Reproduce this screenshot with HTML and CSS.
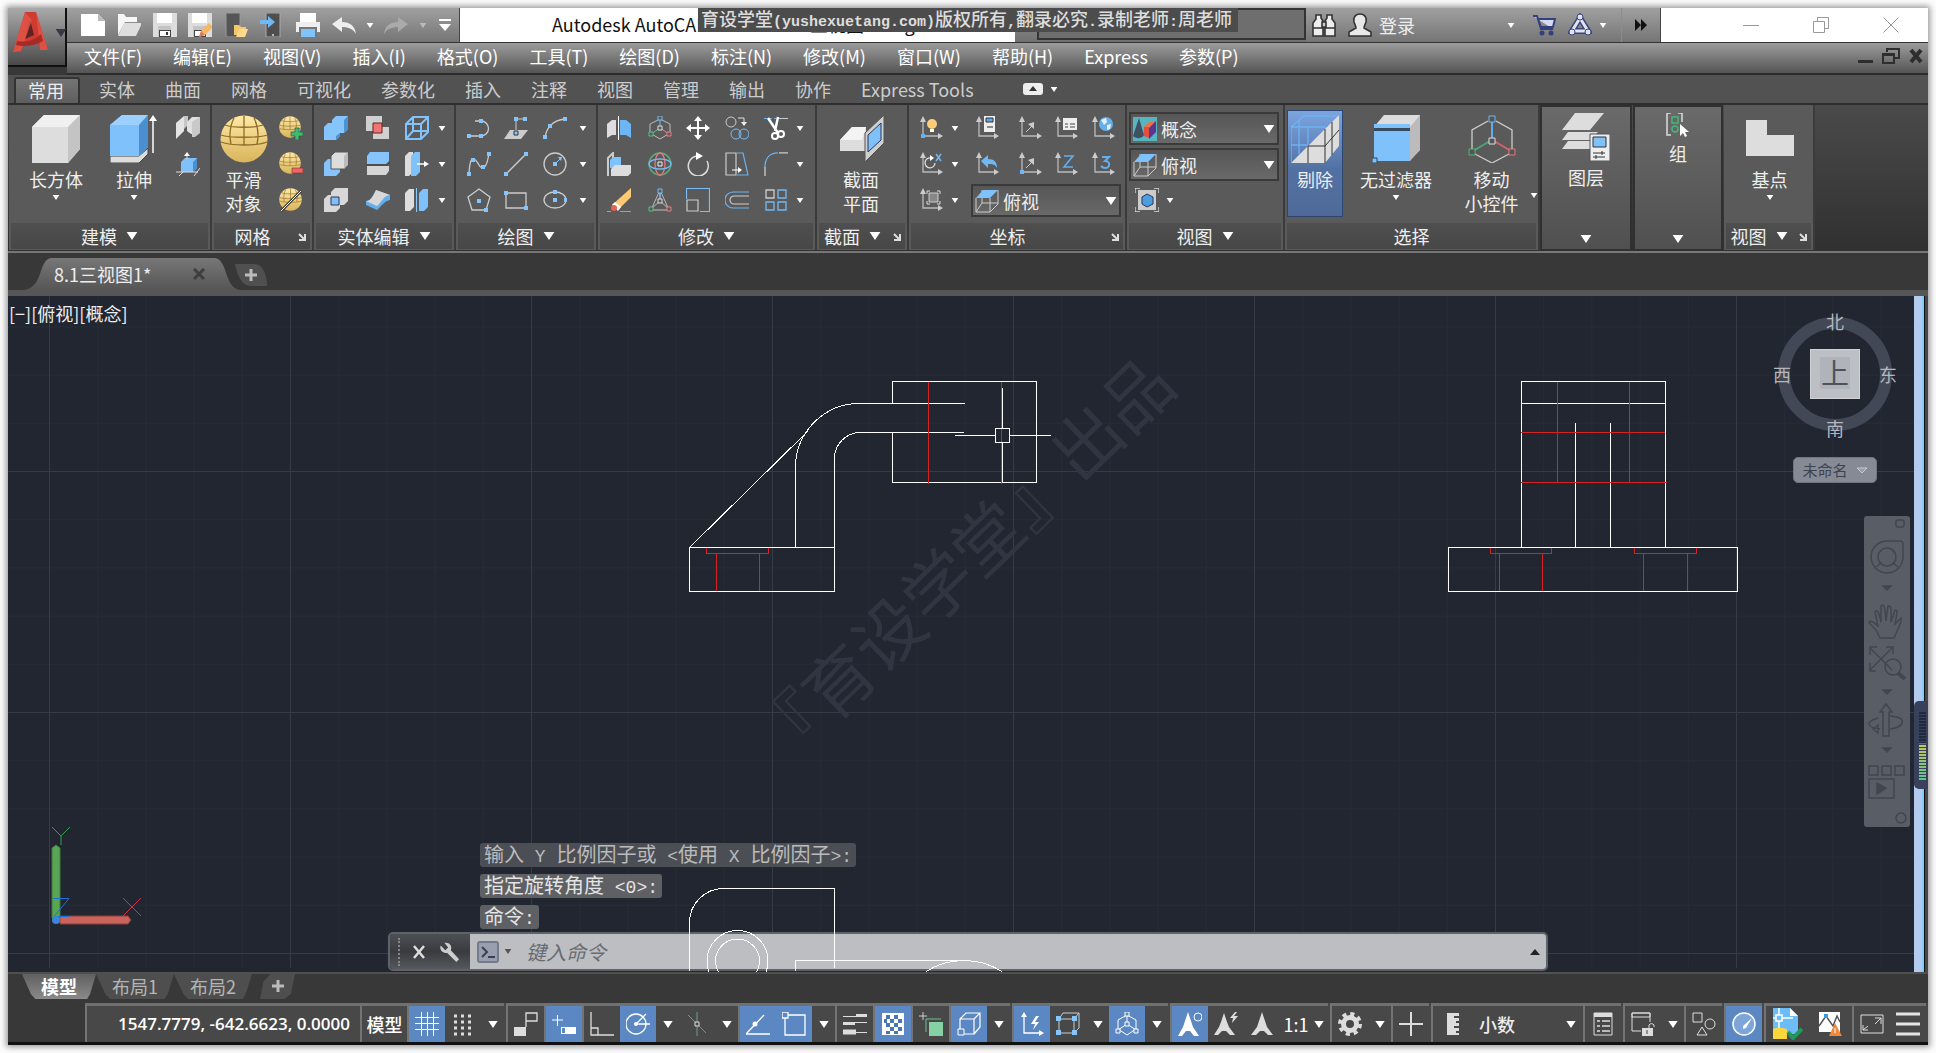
FILE: index.html
```html
<!DOCTYPE html>
<html lang="zh-CN">
<head>
<meta charset="utf-8">
<title>Autodesk AutoCAD 2018</title>
<link rel="stylesheet" href="styles.css">
</head>
<body>
<svg class="defs" aria-hidden="true">
<defs>
<linearGradient id="gG" x1="0" y1="0" x2="0" y2="1"><stop offset="0" stop-color="#ffe9a6"/><stop offset="1" stop-color="#d9b45a"/></linearGradient>
<pattern id="minor" width="48.2" height="48.2" patternUnits="userSpaceOnUse" x="49" y="230"><path d="M.5 0V48.2M0 .5H48.2" stroke="#262c37" fill="none"/></pattern>
<pattern id="major" width="241" height="241" patternUnits="userSpaceOnUse" x="49" y="230"><path d="M.5 0V241M0 .5H241" stroke="#353b47" fill="none"/></pattern>
</defs>
<symbol id="new" viewBox="0 0 24 24"><path d="M0 1h17l7 7v15H0z" fill="#fff"/><path d="M17 1v7h7z" fill="#bbb"/></symbol>
<symbol id="open" viewBox="0 0 24 24"><path d="M1 1h6l2 3h11v5H8L1 22z" fill="#f6f6f6"/><path d="M7 10h18l-6 13H1z" fill="#dedede"/></symbol>
<symbol id="save" viewBox="0 0 24 24"><path d="M0 0h24v24H0z" fill="#ddd"/><path d="M4 0h15v10H4z" fill="#fff"/><path d="M5 13h13v11H5z" fill="#c4c4c4"/><path d="M6 17h12v7H6z" fill="#444"/><path d="M7 18h10v5H7z" fill="#fff"/><path d="M13 19h2v3h-2z" fill="#333"/></symbol>
<symbol id="saveas" viewBox="0 0 24 24"><use href="#save"/><path d="M11 24l2-6 8-8 4 4-8 8z" fill="#f3b860"/><path d="M11 24l2-6 4 4z" fill="#e07466"/></symbol>
<symbol id="mopen" viewBox="0 0 24 24"><path d="M2 0h14v24H2z" fill="#555" stroke="#999"/><path d="M10 12h5l2 2h5v8H10z" fill="#f8c56b"/><path d="M12 24l3-8h9l-3 8z" fill="#ffd98c"/></symbol>
<symbol id="msave" viewBox="0 0 24 24"><path d="M6 0h14v24H6z" fill="#4e4e4e" stroke="#aaa"/><path d="M0 7h8V3l7 6-7 6v-4H0z" fill="#6db8f5"/><circle cx="13" cy="22" r="1" fill="#ddd"/></symbol>
<symbol id="print" viewBox="0 0 24 24"><path d="M4 0h16v9H4z" fill="#fff"/><path d="M0 9h24v10H0z" fill="#eee"/><path d="M3 14h18v10H3z" fill="#777"/><path d="M5 16h14v8H5z" fill="#7ec4fb"/></symbol>
<symbol id="undo" viewBox="0 0 24 24"><path d="M0 11L10 4v5c8 0 13 4 14 12-3-5-7-7-14-7v5z" fill="#eee"/></symbol>
<symbol id="redo" viewBox="0 0 24 24"><path d="M24 11L14 4v5C6 9 1 13 0 21c3-5 7-7 14-7v5z" fill="#aaa"/></symbol>
<symbol id="down" viewBox="0 0 8 6"><path d="M0 0h8L4 6z" fill="currentColor"/></symbol>
<symbol id="corner" viewBox="0 0 8 8"><path d="M1 1l6 6M7 1v6H1" stroke="currentColor" stroke-width="2" fill="none"/></symbol>
<symbol id="bino" viewBox="0 0 24 24"><path d="M4 2h5v3l2 3v15H1V10l3-4zM15 2h5v4l3 4v13H13V8l2-3z" fill="#eee" stroke="#333" stroke-width="1.600"/><path d="M1 15h10M13 15h10M10 9h4v5h-4z" fill="#ccc" stroke="#333" stroke-width="1.600"/></symbol>
<symbol id="user" viewBox="0 0 24 24"><path d="M12 1c5 0 7 4 6 8-1 3-2 4-2 6l7 4v4H1v-4l7-4c0-2-1-3-2-6-1-4 1-8 6-8z" fill="#e8e8e8" stroke="#333" stroke-width="1.6"/></symbol>
<symbol id="cart" viewBox="0 0 24 24"><path d="M1 3h4l4 13h12M6 6h17l-2 8H9z" fill="#d6daf0" stroke="#34407c" stroke-width="2"/><circle cx="10" cy="20" r="2.5" fill="#34407c"/><circle cx="19" cy="20" r="2.5" fill="#34407c"/></symbol>
<symbol id="a360" viewBox="0 0 24 24"><path d="M12 5L4 18h16z" fill="none" stroke="#3a437c" stroke-width="6"/><path d="M12 5L4 18h16z" fill="none" stroke="#e0e3f0" stroke-width="3"/><circle cx="12" cy="4" r="3" fill="#e0e3f0" stroke="#3a437c"/><circle cx="4" cy="19" r="3" fill="#e0e3f0" stroke="#3a437c"/><circle cx="20" cy="19" r="3" fill="#e0e3f0" stroke="#3a437c"/></symbol>
<symbol id="box" viewBox="0 0 48 48"><path d="M0 12L12 0h36v34L36 48H0z" fill="#ddd"/><path d="M0 12L12 0h36L36 12z" fill="#f0f0f0"/><path d="M36 12L48 0v34L36 48z" fill="#c4c4c4"/></symbol>
<symbol id="extrude" viewBox="0 0 48 48"><path d="M0 41h29l9-8v6l-9 9H0z" fill="#ddd" stroke="#444"/><path d="M0 10L12 0h26v32l-9 9H0z" fill="#7fc1fb"/><path d="M0 10L12 0h26l-9 10z" fill="#9cd1ff"/><path d="M29 10l9-10v32l-9 9z" fill="#4a8fd0"/><path d="M43 38V4" stroke="#fff" stroke-width="1.5"/><path d="M39 6l4-6 4 6z" fill="#fff"/></symbol>
<symbol id="poly" viewBox="0 0 24 24"><path d="M0 7l8-7v15l-8 8z" fill="#e4e4e4"/><path d="M8 0h4v9l-4 4z" fill="#c6c6c6"/><path d="M11 6l5-5h8v16l-5 1h-4l-4-3z" fill="#e0e0e0"/><path d="M16 6l8-5v16l-5 4h-3z" fill="#c9c9c9"/></symbol>
<symbol id="press" viewBox="0 0 24 24"><path d="M5 10l4-4h12v10l-4 4H5z" fill="#7fc1fb"/><path d="M17 10l4-4v10l-4 4z" fill="#4a8fd0"/><path d="M0 20h22M3 24l4-4M18 24l6-8M11 7V1" stroke="#ddd" fill="none"/><path d="M8 4l3-4 3 4z" fill="#fff"/></symbol>
<symbol id="egg" viewBox="0 0 48 48"><circle cx="24" cy="24" r="23.5" fill="url(#gG)"/><path d="M24 1v29M1 20c8 3 38 3 46 0M5 10c8 3 30 3 38 0M14 3c-4 8-5 17-3 26M34 3c4 8 5 17 3 26M1 27c10 4 36 4 46 0" fill="none" stroke="#8d6d28" stroke-width="1.3"/></symbol>
<symbol id="eggp" viewBox="0 0 24 24"><svg width="22" height="22" viewBox="0 0 48 48"><use href="#egg"/></svg><path d="M16 12h4v4h4v4h-4v4h-4v-4h-4v-4h4z" fill="#40ba73" stroke="#32583f" stroke-width=".7"/></symbol>
<symbol id="eggm" viewBox="0 0 24 24"><svg width="22" height="22" viewBox="0 0 48 48"><use href="#egg"/></svg><path d="M13 16h11v5H13z" fill="#e66" stroke="#733" stroke-width=".6"/></symbol>
<symbol id="eggs" viewBox="0 0 24 24"><svg width="23" height="23" viewBox="0 0 48 48"><use href="#egg"/></svg><path d="M2 23L22 3" stroke="#444" stroke-width="3"/><path d="M2 23L22 3" stroke="#eee"/></symbol>
<symbol id="union" viewBox="0 0 24 24"><path d="M0 11l4-4h4V4l4-4h12v13l-4 4h-4v3l-4 4H0z" fill="#85c5fc"/><path d="M20 4l4-4v13l-4 4zM12 20l4-3v3l-4 4z" fill="#4d92d4"/></symbol>
<symbol id="subtract" viewBox="0 0 24 24"><path d="M0 11l4-4h12v13l-4 4H0z" fill="#85c5fc"/><path d="M7 4l4-4h13v13l-4 4H7z" fill="#ddd" stroke="#555"/><path d="M20 4l4-4v13l-4 4z" fill="#bbb"/></symbol>
<symbol id="intersect" viewBox="0 0 24 24"><path d="M0 11l4-4h12v13l-4 4H0zM7 4l4-4h13v13l-4 4H7z" fill="#d8d8d8"/><path d="M7 9h8v8H7z" fill="#7fc1fb" stroke="#335"/></symbol>
<symbol id="interf" viewBox="0 0 24 24"><path d="M0 0h16v15H0zM12 11h11v12H7v-6z" fill="#d0d0d0"/><path d="M7 7h9v10H7z" fill="#f27474" stroke="#622"/></symbol>
<symbol id="slice" viewBox="0 0 24 24"><path d="M1 4l3-4h19v9l-3 3H1z" fill="#85c5fc"/><path d="M1 14h22v5l-3 4H1z" fill="#d5d5d5"/><path d="M0 13h21l3-3" stroke="#444" fill="none"/></symbol>
<symbol id="thick" viewBox="0 0 24 24"><path d="M0 13c5 0 7-5 10-11l14 5v5c-7 2-8 6-13 10L0 17z" fill="#65aeec"/><path d="M0 13c5 0 7-5 10-11l14 5c-7 1-8 7-13 11z" fill="#d8d8d8"/></symbol>
<symbol id="wire" viewBox="0 0 24 24"><path d="M1 8l7-7h15v15l-7 7H1zM1 8h15v15M16 8l7-7M8 1v14h15M8 15l-7 8" fill="none" stroke="#84c3fa" stroke-width="2"/></symbol>
<symbol id="exface" viewBox="0 0 24 24"><path d="M0 4l4-4h4v20l-4 4H0z" fill="#ddd"/><path d="M6 4l4-4h5v20l-4 4H6z" fill="#7fc1fb"/><path d="M12 12h9" stroke="#fff" stroke-width="1.5"/><path d="M19 9l5 3-5 3z" fill="#fff"/></symbol>
<symbol id="sep2" viewBox="0 0 24 24"><path d="M0 5l4-4h5v18l-4 4H0z" fill="#ddd"/><path d="M14 5l4-4h5v18l-4 4h-5z" fill="#7fc1fb"/><path d="M11.500 0v24" stroke="#8cc8fa"/></symbol>
<symbol id="mirror" viewBox="0 0 24 24"><path d="M0 8l5-4h4v15H5l-5 3z" fill="#ddd"/><path d="M13 4h6l5 4v14l-5-3h-6z" fill="#6db6f5"/><path d="M11.500 0v24" stroke="#fff"/></symbol>
<symbol id="pline" viewBox="0 0 24 24"><path d="M1 20h13a7 7 0 0 0 0-15H8" fill="none" stroke="#ccc" stroke-width="1.300"/><path d="M0 18h4v4H0zM12 18h4v4h-4zM12 3h4v4h-4z" fill="#86c5fb"/></symbol>
<symbol id="pline3" viewBox="0 0 24 24"><path d="M0 23l6-9h18l-7 9z" fill="#ccc"/><path d="M12 17V3h9" fill="none" stroke="#ccc"/><path d="M10 1h4v4h-4zM19 1h4v4h-4z" fill="#86c5fb"/><path d="M10 15h4v4h-4z" fill="#86c5fb" stroke="#333"/></symbol>
<symbol id="arc" viewBox="0 0 24 24"><path d="M2 22C3 12 10 4 22 3" fill="none" stroke="#ccc" stroke-width="1.300"/><path d="M0 19h4v4H0zM5 8h4v4H5zM20 1h4v4h-4z" fill="#86c5fb"/></symbol>
<symbol id="spline" viewBox="0 0 24 24"><path d="M2 22C3 0 8 6 12 13c4 7 8 2 10-12" fill="none" stroke="#ccc" stroke-width="1.300"/><path d="M0 20h4v4H0zM4 6h4v4H4zM14 13h4v4h-4zM20 0h4v4h-4z" fill="#86c5fb"/></symbol>
<symbol id="line" viewBox="0 0 24 24"><path d="M2 22L22 2" stroke="#ccc" stroke-width="1.300"/><path d="M0 20h4v4H0zM20 0h4v4h-4z" fill="#86c5fb"/></symbol>
<symbol id="circle" viewBox="0 0 24 24"><circle cx="12" cy="12" r="11" fill="none" stroke="#ccc" stroke-width="1.300"/><path d="M12 12l5-5" stroke="#86c5fb"/><path d="M10 10h4v4h-4zM15 5h4l-1 4z" fill="#86c5fb"/></symbol>
<symbol id="polygon" viewBox="0 0 24 24"><path d="M12 1l11 8-4 13H5L1 9z" fill="none" stroke="#ccc" stroke-width="1.300"/><path d="M10 11h4v4h-4zM17 20h4v4h-4z" fill="#86c5fb"/></symbol>
<symbol id="rect" viewBox="0 0 24 24"><path d="M2 5h20v15H2z" fill="none" stroke="#ccc" stroke-width="1.300"/><path d="M0 3h4v4H0zM20 18h4v4h-4z" fill="#86c5fb"/></symbol>
<symbol id="ellipse" viewBox="0 0 24 24"><ellipse cx="12" cy="12" rx="11" ry="8" fill="none" stroke="#ccc" stroke-width="1.300"/><path d="M10 10h4v4h-4zM10 2h4v4h-4zM21 10h4v4h-4z" fill="#86c5fb"/></symbol>
<symbol id="align" viewBox="0 0 24 24"><path d="M1 24V6l5-5v9" fill="none" stroke="#ccc" stroke-width="2"/><path d="M3 8l3-3h8v8l-3 3H3z" fill="#7fc1fb"/><path d="M4 17l4-4h16v8l-3 3H4z" fill="#ddd"/></symbol>
<symbol id="erase" viewBox="0 0 24 24"><path d="M5 17L24 0v9L11 22z" fill="#fcca72"/><path d="M5 17l3-3 6 5-3 4z" fill="#fff"/><circle cx="7" cy="20" r="3" fill="#ea5f55"/><path d="M0 23.500h4M13 23.500h11" stroke="#6ab0ec"/></symbol>
<symbol id="gmove" viewBox="0 0 24 24"><path d="M12 3l10 5v9l-10 6-10-6V8z" fill="none" stroke="#bbb"/><path d="M12 3v9" stroke="#73bcf7"/><path d="M12 12l-9 6" stroke="#52c285"/><path d="M12 12l9 6" stroke="#f27980"/><path d="M10 0h4v4h-4z" fill="#5a5a5a" stroke="#73bcf7"/><path d="M1 16h4v4H1z" fill="#5a5a5a" stroke="#52c285"/><path d="M19 16h4v4h-4z" fill="#5a5a5a" stroke="#f27980"/><path d="M10 10h4v4h-4z" fill="#5a5a5a" stroke="#ddd"/></symbol>
<symbol id="grot" viewBox="0 0 24 24"><circle cx="12" cy="12" r="11" fill="none" stroke="#55b27d" stroke-width="1.300"/><ellipse cx="12" cy="12" rx="5" ry="11" fill="none" stroke="#e8777c" stroke-width="1.300"/><ellipse cx="12" cy="12" rx="11" ry="5" fill="none" stroke="#76b9f2" stroke-width="1.300"/><path d="M10 10h4v4h-4z" fill="#5a5a5a" stroke="#eee"/></symbol>
<symbol id="gscale" viewBox="0 0 24 24"><path d="M12 2L3 22h18zM12 13l-9 8M12 13l9 8M12 2v11" fill="none" stroke="#bbb"/><path d="M12 2v11" stroke="#73bcf7"/><path d="M10 1h4v4h-4z" fill="#5a5a5a" stroke="#73bcf7"/><path d="M1 19h4v4H1z" fill="#5a5a5a" stroke="#52c285"/><path d="M19 19h4v4h-4z" fill="#5a5a5a" stroke="#f27980"/><path d="M10 11h4v4h-4z" fill="#5a5a5a" stroke="#ddd"/></symbol>
<symbol id="move" viewBox="0 0 24 24"><path d="M12 3v18M3 12h18" stroke="#fff" stroke-width="2"/><path d="M8 5l4-5 4 5zM8 19l4 5 4-5zM5 8l-5 4 5 4zM19 8l5 4-5 4z" fill="#fff"/></symbol>
<symbol id="rotate" viewBox="0 0 24 24"><path d="M11 4A10 10 0 1 0 21 9" fill="none" stroke="#ddd" stroke-width="1.500"/><path d="M10 0l7 4-7 4z" fill="#fff"/></symbol>
<symbol id="scale" viewBox="0 0 24 24"><path d="M.500 11V.500h23v23H14" fill="none" stroke="#7abcf3" stroke-width="1.200"/><path d="M1 12h11v11H1z" fill="none" stroke="#ccc" stroke-width="1.200"/></symbol>
<symbol id="copy" viewBox="0 0 24 24"><circle cx="6" cy="6" r="5" fill="none" stroke="#ccc"/><path d="M13 2h6v5" fill="none" stroke="#ddd"/><path d="M16 6h6l-3 4z" fill="#eee"/><circle cx="11" cy="18" r="5" fill="none" stroke="#78bcf5"/><circle cx="19" cy="18" r="5" fill="none" stroke="#78bcf5"/></symbol>
<symbol id="stretch" viewBox="0 0 24 24"><path d="M1 1h10v22H1z" fill="none" stroke="#ccc" stroke-width="1.200"/><path d="M12 1h6l5 22H12" fill="none" stroke="#6ab0ec" stroke-width="1.200"/><path d="M7 18h8" stroke="#fff"/><path d="M13 15l4 3-4 3z" fill="#fff"/></symbol>
<symbol id="offset" viewBox="0 0 24 24"><path d="M24 4H8a8 8 0 0 0 0 16h16" fill="none" stroke="#6db3ee" stroke-width="1.200"/><path d="M24 8H9a4 4 0 0 0 0 8h15" fill="none" stroke="#ccc" stroke-width="1.200"/></symbol>
<symbol id="trim" viewBox="0 0 24 24"><path d="M0 2.500h12" stroke="#6ab0ec" stroke-dasharray="3 2"/><path d="M15 2.500h9" stroke="#ccc"/><path d="M4 2l10 15M14 1l-3 14" stroke="#fff" stroke-width="2.500"/><circle cx="11" cy="20" r="3" fill="none" stroke="#fff" stroke-width="2"/><circle cx="17" cy="18" r="3" fill="none" stroke="#fff" stroke-width="2"/></symbol>
<symbol id="fillet" viewBox="0 0 24 24"><path d="M1 15C1 6 6 1 14 .800" fill="none" stroke="#6db3ee" stroke-width="1.300"/><path d="M1 15v9M15 .800h9" stroke="#ccc" stroke-width="1.300"/></symbol>
<symbol id="array" viewBox="0 0 24 24"><path d="M2 2h8v8H2z" fill="none" stroke="#ccc" stroke-width="1.300"/><path d="M14 2h8v8h-8zM2 14h8v8H2zM14 14h8v8h-8z" fill="none" stroke="#73b8f2" stroke-width="1.300"/></symbol>
<symbol id="section" viewBox="0 0 48 48"><path d="M3 25l12-13h14v24H3z" fill="#ddd"/><path d="M3 25l12-13h14l-4 13z" fill="#f3f3f3"/><path d="M28 18L47 0v28L28 47z" fill="#cfcfcf" stroke="#555"/><path d="M31 20l13-12v17L31 37z" fill="#7fc1fb" stroke="#335"/></symbol>
<symbol id="ax" viewBox="0 0 24 24"><path d="M4 4v16h17" fill="none" stroke="#bbb" stroke-width="1.300"/><path d="M1 6l3-6 3 6zM19 17l5 3-5 3z" fill="#ccc"/></symbol>
<symbol id="ucs" viewBox="0 0 24 24"><use href="#ax"/><circle cx="13" cy="8" r="5" fill="#fbcd78"/><path d="M11 13h4v3h-4z" fill="#fff"/><path d="M2 18h4v4H2z" fill="#64b1f0"/></symbol>
<symbol id="ucsn" viewBox="0 0 24 24"><use href="#ax"/><path d="M9 0h11v16H9z" fill="#eee"/><path d="M11 2h7v4h-7z" fill="#5aa9ea" stroke="#333"/><path d="M12 11h6" stroke="#222"/></symbol>
<symbol id="ucso" viewBox="0 0 24 24"><use href="#ax"/><path d="M8 16l6-6" stroke="#ccc"/><path d="M16 6v7l-6-5z" fill="#ccc"/></symbol>
<symbol id="ucsm" viewBox="0 0 24 24"><use href="#ax"/><path d="M9 2h14v12H9z" fill="#eee"/><path d="M11 8h3M16 8h5M11 11h3M16 11h5" stroke="#444"/></symbol>
<symbol id="ucsw" viewBox="0 0 24 24"><use href="#ax"/><circle cx="15" cy="8" r="7" fill="#63b0ee"/><path d="M10 4l5-2 1 4-3 3zM16 9l4-1-1 5-3 1z" fill="#eee"/></symbol>
<symbol id="ucsx" viewBox="0 0 24 24"><use href="#ax"/><path d="M12 6a5 5 0 1 0 4 5" fill="none" stroke="#ddd" stroke-width="1.300"/><path d="M11 3l4 3-4 3z" fill="#fff"/><path d="M17 2l5 7M22 2l-5 7" stroke="#6fb5f0" stroke-width="1.600"/></symbol>
<symbol id="ucsp" viewBox="0 0 24 24"><use href="#ax"/><path d="M6 9l7-6v4c6 0 9 3 9 9-2-4-5-4-9-4v4z" fill="#6fb8f5"/></symbol>
<symbol id="ucs2" viewBox="0 0 24 24"><use href="#ucso"/><path d="M2 18h4v4H2z" fill="#6fb8f5"/></symbol>
<symbol id="ucsz" viewBox="0 0 24 24"><use href="#ax"/><path d="M10 4h9l-9 11h9" fill="none" stroke="#62aeee" stroke-width="1.600"/></symbol>
<symbol id="ucs3" viewBox="0 0 24 24"><use href="#ax"/><path d="M11 5h7l-4 4c6 0 5 7 0 7-2 0-3-1-4-2" fill="none" stroke="#62aeee" stroke-width="2"/></symbol>
<symbol id="ucsv" viewBox="0 0 24 24"><use href="#ax"/><path d="M10 5h9v9h-9z" fill="#888" stroke="#ccc"/><path d="M8 6V3h3M18 3h3v3M21 13v3h-3M11 16H8v-3" fill="none" stroke="#ddd"/></symbol>
<symbol id="cube" viewBox="0 0 24 24"><path d="M1 9v14h14V9M7 1v13M23 1v14l-8 8M7 14h16M7 14l-6 9" fill="none" stroke="#ccc"/><path d="M1 9l7-8h15l-8 8z" fill="#7fc1fb"/></symbol>
<symbol id="concept" viewBox="0 0 24 24"><path d="M0 0h24v24H0z" fill="#55b6c0"/><path d="M6 1l5 17c-2 4-8 4-11 1z" fill="#3e5064"/><path d="M11 10l5-3v14l-5-2z" fill="#e44d3c"/><path d="M11 10l5-5 7-1-4 6z" fill="#f0704a"/><path d="M16 11l7-7v11l-7 7z" fill="#5a3590"/></symbol>
<symbol id="vp" viewBox="0 0 24 24"><path d="M3 2h18v20H3z" fill="#ccc"/><path d="M7 9l5-3 6 3v7l-6 3-5-3z" fill="#4b9fe0" stroke="#335"/><path d="M0 5V0h5M19 0h5v5M24 19v5h-5M5 24H0v-5" fill="none" stroke="#ddd" stroke-width="1.300"/></symbol>
<symbol id="cull" viewBox="0 0 48 48"><path d="M0 48L48 0v31L34 48z" fill="#ddd"/><path d="M17 31v17M17 31h17V14M34 31L48 15M34 48V31M41 40V7" stroke="#333" fill="none"/><path d="M0 47V12L13 1h34M0 12h35M17 29V12M0 30h17M8 39V5" stroke="#6fb2f5" stroke-width="1.300" fill="none"/></symbol>
<symbol id="nofilter" viewBox="0 0 48 48"><path d="M2 12L12 0h36v35L36 46z" fill="#ddd"/><path d="M38 12L48 0v35L38 46z" fill="#bbb"/><path d="M2 9h36v4H2zM2 16h36v30H2z" fill="#7fc1fb"/><path d="M2 13h36v3H2z" fill="#364b5f"/><path d="M0 43h5v5H0z" fill="#7fc1fb" stroke="#345"/></symbol>
<symbol id="gizmo" viewBox="0 0 48 48"><path d="M20 6L4 15v19M28 6l16 9v19M7 39l17 9 17-9" fill="none" stroke="#ccc" stroke-width="1.300"/><path d="M24 6v17" stroke="#60acea" stroke-width="2"/><path d="M22 26L5 36" stroke="#49a974" stroke-width="2"/><path d="M26 26l17 10" stroke="#d96068" stroke-width="2"/><path d="M21 1h6v6h-6z" fill="#555" stroke="#70b5ef"/><path d="M1 34h6v6H1z" fill="#555" stroke="#4fb57f"/><path d="M41 34h6v6h-6z" fill="#555" stroke="#e8777c"/><path d="M21 23h6v6h-6z" fill="#555" stroke="#ddd"/></symbol>
<symbol id="layers" viewBox="0 0 48 48"><path d="M0 17L13 0h29L28 17zM0 27l6-8h30l-8 8zM0 36l6-8h26v8z" fill="#ddd"/><path d="M28 21h20v27H28z" fill="#eee" stroke="#555"/><path d="M31 24h13v10H31z" fill="#7fc1fb" stroke="#333"/><path d="M31 40h12M31 44h12M40 38v4M34 42v4" stroke="#333"/></symbol>
<symbol id="group" viewBox="0 0 24 24"><path d="M5 0H1v22h4M12 0h4v9" fill="none" stroke="#ddd" stroke-width="1.500"/><path d="M6 4h6v6H6z" fill="none" stroke="#42b877" stroke-width="1.500"/><circle cx="9" cy="16" r="3" fill="none" stroke="#42b877" stroke-width="1.500"/><path d="M14 11v12l3-3 2 4 2-1-2-4h4z" fill="#fff"/></symbol>
<symbol id="basepoint" viewBox="0 0 48 48"><path d="M0 5h21v15h27v21H0z" fill="#ddd"/></symbol>
<symbol id="wrench" viewBox="0 0 24 24"><path d="M3 5l5 5 3-3-4-5c5-1 9 3 7 8l9 10-3 3L10 13C5 14 1 9 3 5z" fill="#ccc"/></symbol>
<symbol id="s-grid" viewBox="0 0 24 24"><path d="M6.500 0v24M12.500 0v24M18.500 0v24M0 5.500h24M0 11.500h24M0 17.500h24" stroke="#fff"/></symbol>
<symbol id="s-snap" viewBox="0 0 24 24"><path d="M3 4h3M10 4h3M17 4h3M3 10h3M10 10h3M17 10h3M3 16h3M10 16h3M17 16h3M3 22h3M10 22h3M17 22h3" stroke="#ddd" stroke-width="3"/></symbol>
<symbol id="s-infer" viewBox="0 0 24 24"><path d="M0 15h12v9H0z" fill="#ddd"/><path d="M12 15V1h11v8H12" fill="none" stroke="#ddd" stroke-width="1.300"/></symbol>
<symbol id="s-dyn" viewBox="0 0 24 24"><path d="M0 8h11M5.500 3v11" stroke="#fff"/><path d="M9 15h15v7H9z" fill="#fff"/><path d="M10 16h3v5h-3z" fill="#5d8ac2"/></symbol>
<symbol id="s-ortho" viewBox="0 0 24 24"><path d="M1 0v23h23M1 16h7v7" fill="none" stroke="#ddd" stroke-width="1.300"/></symbol>
<symbol id="s-polar" viewBox="0 0 24 24"><circle cx="10" cy="12" r="10" fill="none" stroke="#fff" stroke-width="1.300"/><path d="M10 12h14M10 12L20 2" stroke="#fff" stroke-width="1.300"/><circle cx="10" cy="12" r="2" fill="#fff"/></symbol>
<symbol id="s-iso" viewBox="0 0 24 24"><path d="M12 0v24" stroke="#62a383"/><path d="M3 3l18 18" stroke="#d86a6e"/><path d="M10 10h4v4h-4z" fill="#4a4a4a" stroke="#ddd"/></symbol>
<symbol id="s-track" viewBox="0 0 24 24"><path d="M18 3L0 22h24" fill="none" stroke="#fff" stroke-width="1.300"/><circle cx="9" cy="12" r="2.500" fill="#fff"/></symbol>
<symbol id="s-osnap" viewBox="0 0 24 24"><path d="M3 3h20v20H3z" fill="none" stroke="#fff" stroke-width="1.300"/><path d="M0 0h6v6H0z" fill="#5d8ac2" stroke="#fff" stroke-width="1.300"/></symbol>
<symbol id="s-lw" viewBox="0 0 24 24"><path d="M0 4.500h24M12 10.500h12M12 20.500h12" stroke="#ddd"/><path d="M0 11.500h12M13 3.500h11" stroke="#ddd" stroke-width="3"/><path d="M0 20h13" stroke="#ddd" stroke-width="5"/></symbol>
<symbol id="s-trans" viewBox="0 0 24 24"><path d="M1 1h22v22H1z" fill="#fff"/><path d="M5 3h4v4H5zM13 3h4v4h-4zM3 7h3v4H3zM9 7h4v4H9zM17 7h4v4h-4zM5 11h4v4H5zM13 11h4v4h-4zM9 15h4v4H9zM17 15h4v4h-4zM5 19h4v3H5zM13 19h4v3h-4z" fill="#4b76b5"/></symbol>
<symbol id="s-cycle" viewBox="0 0 24 24"><path d="M0 4h8M4 0v8" stroke="#ccc"/><path d="M7 20V7h15" fill="none" stroke="#70be90"/><path d="M10 10h14v14H10z" fill="#85d1a3"/></symbol>
<symbol id="s-3d" viewBox="0 0 24 24"><path d="M3 7h14v15H3zM3 7l6-6h14v14l-6 7M17 7l6-6" fill="none" stroke="#fff" stroke-width="1.200"/><path d="M1 17h6v6H1z" fill="#5d8ac2" stroke="#fff"/></symbol>
<symbol id="s-ducs" viewBox="0 0 24 24"><path d="M4 3v18h18" fill="none" stroke="#fff" stroke-width="1.300"/><path d="M1 5l3-5 3 5zM19 18l5 3-5 3zM16 4l-5 8h4l-2 6 6-8h-4l4-6z" fill="#fff"/></symbol>
<symbol id="s-filter" viewBox="0 0 24 24"><path d="M3 7h15v14H3zM3 7l4-6h16v15l-5 5M18 7l5-6" fill="none" stroke="#ccc"/><path d="M0 4h5v5H0zM16 4h5v5h-5zM0 18h5v5H0zM16 18h5v5h-5z" fill="#86c5fb"/></symbol>
<symbol id="s-gizmo" viewBox="0 0 24 24"><path d="M12 3l9 5v9l-9 6-9-6V8zM12 3v10M12 12l-9 6M12 12l9 6" fill="none" stroke="#fff"/><path d="M10 0h4v4h-4zM1 17h4v4H1zM19 17h4v4h-4zM10 10h4v4h-4z" fill="#5d8ac2" stroke="#fff"/></symbol>
<symbol id="s-a" viewBox="0 0 24 24"><path d="M12 0l3 9 2 6 6 8h-5l-4-4h-4l-4 4H1l6-8 2-6z" fill="#ddd"/></symbol>
<symbol id="s-a1" viewBox="0 0 24 24"><path d="M10 0l3 9 2 6 6 9h-5l-4-5H8l-4 5H0l5-9 2-6z" fill="#fff"/><circle cx="20" cy="5" r="4" fill="none" stroke="#fff"/></symbol>
<symbol id="s-a2" viewBox="0 0 24 24"><path d="M10 1l3 9 2 5 6 8h-5l-4-4H8l-4 4H0l5-8 2-5z" fill="#ddd"/><path d="M21 0l-5 6h3l-1 5 6-7h-4l3-4z" fill="#ddd"/></symbol>
<symbol id="s-gear" viewBox="0 0 24 24"><circle cx="12" cy="12" r="6.500" fill="none" stroke="#ddd" stroke-width="5"/><circle cx="12" cy="12" r="10" fill="none" stroke="#ddd" stroke-width="4" stroke-dasharray="4 3.850"/></symbol>
<symbol id="s-plus" viewBox="0 0 24 24"><path d="M12 0v24M0 12h24" stroke="#ddd" stroke-width="2"/></symbol>
<symbol id="s-ruler" viewBox="0 0 24 24"><path d="M6 1h12v3h-5v2h5v3h-3v2h3v3h-5v2h5v3h-3v2h3v2H6z" fill="#ddd"/></symbol>
<symbol id="s-props" viewBox="0 0 24 24"><path d="M3 1h18v22H3z" fill="none" stroke="#ddd"/><path d="M3 1h18v4H3z" fill="#ddd"/><path d="M6 9h3M11 9h8M6 14h3M11 14h8M6 19h3M11 19h8" stroke="#ddd" stroke-width="1.500"/></symbol>
<symbol id="s-lock" viewBox="0 0 24 24"><path d="M10 19H1V1h18v9" fill="none" stroke="#ddd"/><path d="M1 1h18v4H1z" fill="none" stroke="#ddd"/><path d="M11 16h11v8H11z" fill="#ddd"/><path d="M18 16v-3a3 3 0 0 1 5 0v2" fill="none" stroke="#ddd"/><path d="M16 18v4" stroke="#444"/></symbol>
<symbol id="s-iso2" viewBox="0 0 24 24"><path d="M1 1h9v9H1zM5 23l5-8 5 8z" fill="none" stroke="#ddd"/><circle cx="18" cy="12" r="5" fill="none" stroke="#ddd"/></symbol>
<symbol id="s-clock" viewBox="0 0 24 24"><circle cx="12" cy="12" r="11" fill="#7da5da" stroke="#fff" stroke-width="1.500"/><path d="M11 14l9-8-6 10-3 1z" fill="#fff"/></symbol>
<symbol id="s-dwg" viewBox="0 0 32 32"><path d="M2 0h17l8 8v18H2z" fill="#6bbcf7"/><path d="M19 0l8 8h-8z" fill="#fff"/><path d="M8 0v22M2 10h20" stroke="#fff" stroke-width="1.500"/><path d="M5 7h6v6H5z" fill="#6bbcf7" stroke="#fff" stroke-width="1.500"/><path d="M2 21c5-2 9-1 14 0v10H2z" fill="#fbd63c"/><path d="M17 24l5 6 9-9" fill="none" stroke="#22965b" stroke-width="4"/></symbol>
<symbol id="s-warn" viewBox="0 0 24 24"><path d="M1 0h21v20H1z" fill="#fff"/><path d="M1 14L8 4l7 10 4-10 3 6" fill="none" stroke="#555" stroke-width="1.500"/><path d="M6 2h4v4H6z" fill="#349dde"/><path d="M17 11l7 13H11z" fill="#f0883a"/><path d="M17 16v5" stroke="#fff"/></symbol>
<symbol id="s-full" viewBox="0 0 24 24"><path d="M1 3h22v18H1z" fill="none" stroke="#ddd"/><path d="M15 6h6v6M21 6l-6 6M3 13v5h5M3 18l5-4" fill="none" stroke="#ddd"/></symbol>
<symbol id="s-menu" viewBox="0 0 24 24"><path d="M0 2h24M0 12h24M0 22h24" stroke="#e6e6e6" stroke-width="3"/></symbol>
</svg>

<div class="app">
<header class="top">
  <button class="appbtn" aria-label="应用程序菜单"><svg width="38" height="44" viewBox="0 0 38 44"><path d="M13 1h11l12 38h-8l-3-9-13 3-3 8H1z" fill="#cf3a31"/><path d="M18 9l4 15-9 4z" fill="#5c2322"/><path d="M13 1L1 41l8-1L20 9zM24 1l12 38h-8z" fill="#e25a4c" opacity=".7"/><path d="M5 30c9 2 18-1 24-7l2 7c-8 5-18 6-27 4z" fill="#a82a27"/></svg><svg class="dn dn12"><use href="#down"/></svg></button>
  <div class="titlebar">
    <div class="qat">
      <button aria-label="新建"><svg class="i"><use href="#new"/></svg></button><button aria-label="打开"><svg class="i"><use href="#open"/></svg></button><button aria-label="保存"><svg class="i"><use href="#save"/></svg></button><button aria-label="另存为"><svg class="i"><use href="#saveas"/></svg></button><button aria-label="从移动设备打开"><svg class="i"><use href="#mopen"/></svg></button><button aria-label="保存到移动设备"><svg class="i"><use href="#msave"/></svg></button><button aria-label="打印"><svg class="i"><use href="#print"/></svg></button><button aria-label="放弃"><svg class="i"><use href="#undo"/></svg></button><button class="nar" aria-label="放弃列表"><svg class="dn"><use href="#down"/></svg></button><button aria-label="重做"><svg class="i"><use href="#redo"/></svg></button><button class="nar dim" aria-label="重做列表"><svg class="dn"><use href="#down"/></svg></button><button class="cust" aria-label="自定义"><svg width="12" height="12" viewBox="0 0 12 12"><path d="M0 1h12" stroke="#fff" stroke-width="2"/><path d="M0 5h12l-6 7z" fill="#fff"/></svg></button>
    </div>
    <div class="title">Autodesk AutoCAD 2018&nbsp;&nbsp; &nbsp; &nbsp; &nbsp;8.1三视图1.dwg</div>
    <input class="search" type="text" aria-label="搜索">
    <div class="info">
      <button aria-label="查找"><svg class="i"><use href="#bino"/></svg></button><button class="login"><svg class="i"><use href="#user"/></svg><span>登录</span><svg class="dn"><use href="#down"/></svg></button><button aria-label="商店"><svg class="i"><use href="#cart"/></svg></button><button class="a360" aria-label="A360"><svg class="i"><use href="#a360"/></svg><svg class="dn"><use href="#down"/></svg></button><button class="more" aria-label="更多"><svg width="12" height="12" viewBox="0 0 12 12"><path d="M0 0l6 6-6 6zM6 0l6 6-6 6z" fill="#111"/></svg></button>
    </div>
    <div class="winctl">
      <button aria-label="最小化"><svg width="16" height="16" viewBox="0 0 16 16"><path d="M0 8.500h16"/></svg></button><button aria-label="还原"><svg width="16" height="16" viewBox="0 0 16 16"><path d="M.500 4.500h11v11H.500zM4.500 4V.500h11v11H12"/></svg></button><button aria-label="关闭"><svg width="16" height="16" viewBox="0 0 16 16"><path d="M.500.500l15 15M15.500.500l-15 15"/></svg></button>
    </div>
    <div class="notice">育设学堂<b>(yushexuetang.com)</b>版权所有<b>,</b>翻录必究<b>.</b>录制老师<b>:</b>周老师</div>
  </div>
  <nav class="menubar">
    <button>文件(F)</button><button>编辑(E)</button><button>视图(V)</button><button>插入(I)</button><button>格式(O)</button><button>工具(T)</button><button>绘图(D)</button><button>标注(N)</button><button>修改(M)</button><button>窗口(W)</button><button>帮助(H)</button><button>Express</button><button>参数(P)</button>
    <div class="docctl"><svg width="15" height="18" viewBox="0 0 15 18"><path d="M0 13h15v3H0z" fill="#2e2e2e"/></svg><svg width="18" height="18" viewBox="0 0 18 18"><path d="M1 7h11v9H1zM5 5V2h12v9h-4M1 8h11" fill="none" stroke="#2e2e2e" stroke-width="2"/></svg><svg width="14" height="18" viewBox="0 0 14 18"><path d="M2 3l10 12M12 3L2 15" stroke="#2e2e2e" stroke-width="4"/></svg></div>
  </nav>
</header>

<nav class="tabs">
  <button class="on">常用</button><button>实体</button><button>曲面</button><button>网格</button><button>可视化</button><button>参数化</button><button>插入</button><button>注释</button><button>视图</button><button>管理</button><button>输出</button><button>协作</button><button>Express Tools</button>
  <button class="fold" aria-label="最小化功能区"><svg width="20" height="12" viewBox="0 0 20 12"><rect width="20" height="12" rx="3" fill="#eee"/><path d="M6 8l4-5 4 5z" fill="#333"/></svg><svg class="dn"><use href="#down"/></svg></button>
</nav>

<div class="ribbon">
  <section class="panel p-model"><div class="body">
    <button class="big"><svg class="b"><use href="#box"/></svg><span>长方体</span><svg class="dn"><use href="#down"/></svg></button>
    <button class="big"><svg class="b"><use href="#extrude"/></svg><span>拉伸</span><svg class="dn"><use href="#down"/></svg></button>
    <div class="col"><button aria-label="多段体"><svg class="i"><use href="#poly"/></svg></button><button aria-label="按住并拖动"><svg class="i"><use href="#press"/></svg></button></div>
  </div><h3>建模<svg class="dn dn12"><use href="#down"/></svg></h3></section>

  <section class="panel p-mesh"><div class="body">
    <button class="big"><svg class="b"><use href="#egg"/></svg><span>平滑<br>对象</span></button>
    <div class="col"><button aria-label="提高平滑度"><svg class="i"><use href="#eggp"/></svg></button><button aria-label="降低平滑度"><svg class="i"><use href="#eggm"/></svg></button><button aria-label="分割网格"><svg class="i"><use href="#eggs"/></svg></button></div>
  </div><h3>网格<svg class="corner"><use href="#corner"/></svg></h3></section>

  <section class="panel p-edit"><div class="body">
    <button aria-label="并集"><svg class="i"><use href="#union"/></svg></button><button aria-label="干涉"><svg class="i"><use href="#interf"/></svg></button><button aria-label="提取边"><svg class="i"><use href="#wire"/></svg></button><button aria-label="列表"><svg class="dn"><use href="#down"/></svg></button>
    <button aria-label="差集"><svg class="i"><use href="#subtract"/></svg></button><button aria-label="剖切"><svg class="i"><use href="#slice"/></svg></button><button aria-label="拉伸面"><svg class="i"><use href="#exface"/></svg></button><button aria-label="列表"><svg class="dn"><use href="#down"/></svg></button>
    <button aria-label="交集"><svg class="i"><use href="#intersect"/></svg></button><button aria-label="加厚"><svg class="i"><use href="#thick"/></svg></button><button aria-label="分割"><svg class="i"><use href="#sep2"/></svg></button><button aria-label="列表"><svg class="dn"><use href="#down"/></svg></button>
  </div><h3>实体编辑<svg class="dn dn12"><use href="#down"/></svg></h3></section>

  <section class="panel p-draw"><div class="body">
    <button aria-label="多段线"><svg class="i"><use href="#pline"/></svg></button><button aria-label="三维多段线"><svg class="i"><use href="#pline3"/></svg></button><button aria-label="圆弧"><svg class="i"><use href="#arc"/></svg></button><button aria-label="列表"><svg class="dn"><use href="#down"/></svg></button>
    <button aria-label="样条曲线"><svg class="i"><use href="#spline"/></svg></button><button aria-label="直线"><svg class="i"><use href="#line"/></svg></button><button aria-label="圆"><svg class="i"><use href="#circle"/></svg></button><button aria-label="列表"><svg class="dn"><use href="#down"/></svg></button>
    <button aria-label="多边形"><svg class="i"><use href="#polygon"/></svg></button><button aria-label="矩形"><svg class="i"><use href="#rect"/></svg></button><button aria-label="椭圆"><svg class="i"><use href="#ellipse"/></svg></button><button aria-label="列表"><svg class="dn"><use href="#down"/></svg></button>
  </div><h3>绘图<svg class="dn dn12"><use href="#down"/></svg></h3></section>

  <section class="panel p-modify"><div class="body">
    <button aria-label="三维镜像"><svg class="i"><use href="#mirror"/></svg></button><button aria-label="三维移动"><svg class="i"><use href="#gmove"/></svg></button><button aria-label="移动"><svg class="i"><use href="#move"/></svg></button><button aria-label="复制"><svg class="i"><use href="#copy"/></svg></button><button aria-label="修剪"><svg class="i"><use href="#trim"/></svg></button><button aria-label="列表"><svg class="dn"><use href="#down"/></svg></button>
    <button aria-label="三维对齐"><svg class="i"><use href="#align"/></svg></button><button aria-label="三维旋转"><svg class="i"><use href="#grot"/></svg></button><button aria-label="旋转"><svg class="i"><use href="#rotate"/></svg></button><button aria-label="拉伸"><svg class="i"><use href="#stretch"/></svg></button><button aria-label="圆角"><svg class="i"><use href="#fillet"/></svg></button><button aria-label="列表"><svg class="dn"><use href="#down"/></svg></button>
    <button aria-label="删除"><svg class="i"><use href="#erase"/></svg></button><button aria-label="三维缩放"><svg class="i"><use href="#gscale"/></svg></button><button aria-label="缩放"><svg class="i"><use href="#scale"/></svg></button><button aria-label="偏移"><svg class="i"><use href="#offset"/></svg></button><button aria-label="阵列"><svg class="i"><use href="#array"/></svg></button><button aria-label="列表"><svg class="dn"><use href="#down"/></svg></button>
  </div><h3>修改<svg class="dn dn12"><use href="#down"/></svg></h3></section>

  <section class="panel p-section"><div class="body">
    <button class="big"><svg class="b"><use href="#section"/></svg><span>截面<br>平面</span></button>
  </div><h3>截面<svg class="dn dn12"><use href="#down"/></svg><svg class="corner"><use href="#corner"/></svg></h3></section>

  <section class="panel p-ucs"><div class="body">
    <button aria-label="UCS 图标"><svg class="i"><use href="#ucs"/></svg></button><button aria-label="列表"><svg class="dn"><use href="#down"/></svg></button><button aria-label="命名 UCS"><svg class="i"><use href="#ucsn"/></svg></button><button aria-label="UCS"><svg class="i"><use href="#ucso"/></svg></button><button aria-label="管理 UCS"><svg class="i"><use href="#ucsm"/></svg></button><button aria-label="世界"><svg class="i"><use href="#ucsw"/></svg></button>
    <button aria-label="X"><svg class="i"><use href="#ucsx"/></svg></button><button aria-label="列表"><svg class="dn"><use href="#down"/></svg></button><button aria-label="上一个"><svg class="i"><use href="#ucsp"/></svg></button><button aria-label="原点"><svg class="i"><use href="#ucs2"/></svg></button><button aria-label="Z 轴矢量"><svg class="i"><use href="#ucsz"/></svg></button><button aria-label="三点"><svg class="i"><use href="#ucs3"/></svg></button>
    <button aria-label="视图"><svg class="i"><use href="#ucsv"/></svg></button><button aria-label="列表"><svg class="dn"><use href="#down"/></svg></button><label class="combo"><svg class="i"><use href="#cube"/></svg><select aria-label="UCS 方向"><option>俯视</option></select><svg class="dn dn12"><use href="#down"/></svg></label>
  </div><h3>坐标<svg class="corner"><use href="#corner"/></svg></h3></section>

  <section class="panel p-view"><div class="body">
    <label class="combo"><svg class="i"><use href="#concept"/></svg><select aria-label="视觉样式"><option>概念</option></select><svg class="dn dn12"><use href="#down"/></svg></label>
    <label class="combo"><svg class="i"><use href="#cube"/></svg><select aria-label="视图方向"><option>俯视</option></select><svg class="dn dn12"><use href="#down"/></svg></label>
    <button class="vp" aria-label="视口"><svg class="i"><use href="#vp"/></svg><svg class="dn"><use href="#down"/></svg></button>
  </div><h3>视图<svg class="dn dn12"><use href="#down"/></svg></h3></section>

  <section class="panel p-select"><div class="body">
    <button class="big active"><svg class="b"><use href="#cull"/></svg><span>剔除</span></button>
    <button class="big"><svg class="b"><use href="#nofilter"/></svg><span>无过滤器</span><svg class="dn"><use href="#down"/></svg></button>
    <button class="big"><svg class="b"><use href="#gizmo"/></svg><span>移动<br>小控件</span></button>
    <button class="side" aria-label="列表"><svg class="dn"><use href="#down"/></svg></button>
  </div><h3>选择</h3></section>

  <button class="shut"><svg class="b"><use href="#layers"/></svg><span>图层</span><svg class="dn dn12"><use href="#down"/></svg></button>
  <button class="shut"><svg class="i"><use href="#group"/></svg><span>组</span><svg class="dn dn12"><use href="#down"/></svg></button>
  <section class="panel p-base"><div class="body">
    <button class="big"><svg class="b"><use href="#basepoint"/></svg><span>基点</span><svg class="dn"><use href="#down"/></svg></button>
  </div><h3>视图<svg class="dn dn12"><use href="#down"/></svg><svg class="corner"><use href="#corner"/></svg></h3></section>
</div>

<div class="files">
  <button class="file"><svg class="shape" width="216" height="33" viewBox="0 0 216 33"><defs><linearGradient id="ft" x1="0" y1="0" x2="0" y2="1"><stop offset="0" stop-color="#777"/><stop offset="1" stop-color="#565656"/></linearGradient></defs><path d="M0 33C20 31 14 1 28 1H190C204 1 200 31 216 33z" fill="url(#ft)"/></svg><span>8.1三视图1*</span><svg class="x" width="12" height="12" viewBox="0 0 12 12"><path d="M1 1l10 10M11 1L1 11" stroke="#3e3e3e" stroke-width="3"/></svg></button>
  <button class="add" aria-label="新图形"><svg width="32" height="22" viewBox="0 0 32 22"><path d="M0 0h20c8 0 12 12 12 22H16C6 22 2 10 0 0z" fill="#505050"/><path d="M16 5v12M10 11h12" stroke="#bbb" stroke-width="3"/></svg></button>
</div>

<main class="canvas">
  <svg class="drawing">
    <g transform="translate(-8 -296)">
      <rect x="8" y="296" width="3000" height="672" fill="url(#minor)"/>
      <rect x="8" y="296" width="3000" height="672" fill="url(#major)"/>
      <text class="wm" transform="translate(960 559) rotate(-44)" text-anchor="middle" dominant-baseline="central">『育设学堂』出品</text>
      <g fill="none" stroke="#fff" shape-rendering="crispEdges">
        <path d="M892.500 403.500V381.500H1036.500V482.500H892.500V432.500M834.500 547.500H689.500V591.500H834.500V547.500"/>
        <path d="M965 403.500H860A64 64 0 0 0 795.500 467V547M964 432.500H860A26 26 0 0 0 834.500 458V547M689.500 547.500L808 431"/>
        <path d="M1521.500 547.500V381.500H1665.500V547.500M1521.500 403.500H1665.500M1575.500 423V547M1610.500 423V547M1448.500 547.500H1737.500V591.500H1448.500z"/>
      </g>
      <g fill="none" stroke="#d62222" shape-rendering="crispEdges">
        <path d="M928.500 382V484M1001.500 382V484M706.500 548V553.500H768.500V548M716.500 554V591M759.500 554V591"/>
        <path d="M1521 432.500H1665M1521 482.500H1667M1557.500 382V482M1629.500 382V482M1490.500 548V553.500H1551.500V548M1499.500 554V591M1542.500 554V591M1634.500 548V553.500H1696.500V548M1643.500 554V591M1687.500 554V591"/>
      </g>
      <path d="M955 435.500H995M1010 435.500H1051M1002.500 388V428M1002.500 442V483M995.500 428.500h14v14h-14z" fill="none" stroke="#fff" shape-rendering="crispEdges"/>
      <g fill="none" stroke-width="1">
        <path d="M52 848l4-3 4 3v70h-8z" fill="#5aa555" stroke="#3d7d3e"/><path d="M60 916h68l3 4-3 4H60z" fill="#c9645c" stroke="#8f3c38"/>
        <path d="M52 827l9 9 9-9M61 836v9" stroke="#2fa34a"/><path d="M123 898l18 18M141 898l-18 18" stroke="#c93848"/><path d="M53 898.500h16L54 916.500h15" stroke="#1d6fd8"/><circle cx="56" cy="920" r="4" fill="#3c86d6"/>
      </g>
    </g>
  </svg>
  <div class="vplabel">[−][俯视][概念]</div>

  <div class="history"><div>输入<i> Y </i>比例因子或<i> &lt;</i>使用<i> X </i>比例因子<i>&gt;:</i></div><div>指定旋转角度<i> &lt;0&gt;:</i></div><div>命令<i>:</i></div></div>
  <div class="cmd">
    <div class="cmdl"><span class="grip"></span><svg width="14" height="14" viewBox="0 0 14 14"><path d="M2 1l10 12M12 1L2 13" stroke="#ddd" stroke-width="2.500"/></svg><svg width="22" height="22"><use href="#wrench"/></svg></div>
    <div class="cmdr"><svg width="22" height="22" viewBox="0 0 22 22"><rect x="1" y="1" width="20" height="20" rx="2" fill="#9a9fb0" stroke="#747b8e" stroke-width="2"/><path d="M5 6l5 5-5 5M11 16h7" fill="none" stroke="#3a4052" stroke-width="2"/></svg><svg class="dn"><use href="#down"/></svg><input type="text" placeholder="键入命令" aria-label="命令"><svg class="up" width="10" height="6" viewBox="0 0 10 6"><path d="M0 6l5-6 5 6z" fill="#222"/></svg></div>
  </div>
  <svg class="drawing over">
    <g transform="translate(-8 -296)" fill="none" stroke="#fff" shape-rendering="crispEdges"><path d="M689.500 971V922A34 34 0 0 1 723.500 888.500H834.500V968M795.500 971V960.500H964"/><circle cx="737.500" cy="961" r="30.500"/><circle cx="737.500" cy="961" r="22"/><circle cx="964" cy="1029.500" r="69"/></g>
  </svg>

  <div class="viewcube">
    <svg width="130" height="136" viewBox="0 0 130 136"><circle cx="65" cy="68" r="51" fill="none" stroke="#424856" stroke-width="12"/><rect x="40.500" y="43.500" width="49" height="49" fill="#bcbfc3" stroke="#d0d2d5"/><rect x="50" y="51" width="30" height="32" fill="#b0b4ba"/></svg>
    <span class="n">北</span><span class="w">西</span><span class="up2">上</span><span class="e">东</span><span class="s">南</span>
  </div>
  <button class="wcs">未命名<svg width="12" height="7" viewBox="0 0 12 7"><path d="M1 1h10L6 6z" fill="#9a9fa8" stroke="#c5c8ce"/></svg></button>
  <div class="navbar">
    <svg viewBox="0 0 46 311" width="46" height="311" fill="none" stroke="#414650" stroke-width="1.500">
      <rect x="32" y="4" width="8" height="7" rx="2"/><path d="M22 25H36a3 3 0 0 1 3 3V42a16 16 0 1 1-17-17z"/><circle cx="23" cy="41" r="9"/><path d="M12 51l5-4M34 51l-5-4"/><path d="M19 70h8l-4 4z" fill="#414650"/>
      <path d="M14 118c-2-7-7-7-9-12 3-3 6 2 9 4l-3-14c3-3 4 1 6 10V90c3-3 4 1 5 15l2-15c4-1 3 4 3 16l4-12c4 0 1 6 0 14l6-6c2 3-4 12-7 20H16z"/>
      <path d="M6 132l22 22M28 132L6 154M6 139v-8h7M22 131h7v7M6 147v8h6"/><circle cx="29" cy="151" r="8"/><path d="M34 157l7 6" stroke-width="4"/><path d="M19 174h8l-4 4z" fill="#414650"/>
      <path d="M19 220v-24h-3l6-8 6 8h-3v24zM14 202C0 206 4 212 16 213M26 200c17 1 16 11 0 13M14 209l-5 4 5 4z"/><path d="M19 232h8l-4 4z" fill="#414650"/>
      <path d="M5 250h9v9H5zM18 250h9v9h-9zM31 250h9v9h-9zM5 263h25v19H5z"/><path d="M13 267v11l9-6z" fill="#414650"/><circle cx="37" cy="302" r="5"/>
    </svg>
  </div>
  <div class="edge"></div>
  <div class="meter"><span></span></div>
</main>

<div class="layouts">
  <button class="on">模型</button><button>布局1</button><button>布局2</button><button class="plus" aria-label="新建布局"><svg width="12" height="12" viewBox="0 0 12 12"><path d="M6 0v12M0 6h12" stroke="#bbb" stroke-width="3"/></svg></button>
</div>

<footer class="status">
  <div class="coords">1547.7779, -642.6623, 0.0000</div>
  <button class="ms sep">模型</button>
  <button class="st sep on" aria-label="栅格"><svg class="i"><use href="#s-grid"/></svg></button><button class="st" aria-label="捕捉"><svg class="i"><use href="#s-snap"/></svg></button><button class="sa" aria-label="列表"><svg class="dn dn10"><use href="#down"/></svg></button>
  <button class="st sep gap" aria-label="推断约束"><svg class="i"><use href="#s-infer"/></svg></button><button class="st sep on" aria-label="动态输入"><svg class="i"><use href="#s-dyn"/></svg></button><button class="st sep" aria-label="正交"><svg class="i"><use href="#s-ortho"/></svg></button><button class="st on" aria-label="极轴"><svg class="i"><use href="#s-polar"/></svg></button><button class="sa" aria-label="列表"><svg class="dn dn10"><use href="#down"/></svg></button><button class="st" aria-label="等轴测"><svg class="i"><use href="#s-iso"/></svg></button><button class="sa" aria-label="列表"><svg class="dn dn10"><use href="#down"/></svg></button><button class="st sep on" aria-label="对象捕捉追踪"><svg class="i"><use href="#s-track"/></svg></button><button class="st on" aria-label="对象捕捉"><svg class="i"><use href="#s-osnap"/></svg></button><button class="sa" aria-label="列表"><svg class="dn dn10"><use href="#down"/></svg></button><button class="st sep" aria-label="线宽"><svg class="i"><use href="#s-lw"/></svg></button><button class="st sep on" aria-label="透明度"><svg class="i"><use href="#s-trans"/></svg></button><button class="st sep" aria-label="选择循环"><svg class="i"><use href="#s-cycle"/></svg></button><button class="st sep on" aria-label="三维对象捕捉"><svg class="i"><use href="#s-3d"/></svg></button><button class="sa" aria-label="列表"><svg class="dn dn10"><use href="#down"/></svg></button>
  <button class="st sep gap on" aria-label="动态 UCS"><svg class="i"><use href="#s-ducs"/></svg></button><button class="st" aria-label="选择过滤"><svg class="i"><use href="#s-filter"/></svg></button><button class="sa" aria-label="列表"><svg class="dn dn10"><use href="#down"/></svg></button><button class="st on" aria-label="小控件"><svg class="i"><use href="#s-gizmo"/></svg></button><button class="sa" aria-label="列表"><svg class="dn dn10"><use href="#down"/></svg></button>
  <button class="st sep gap on" aria-label="注释可见性"><svg class="i"><use href="#s-a1"/></svg></button><button class="st" aria-label="自动缩放"><svg class="i"><use href="#s-a2"/></svg></button><button class="st" aria-label="注释"><svg class="i"><use href="#s-a"/></svg></button><button class="ratio">1:1<svg class="dn dn10"><use href="#down"/></svg></button>
  <button class="st sep gap" aria-label="工作空间"><svg class="i"><use href="#s-gear"/></svg></button><button class="sa" aria-label="列表"><svg class="dn dn10"><use href="#down"/></svg></button><button class="st sep" aria-label="注释监视器"><svg class="i"><use href="#s-plus"/></svg></button>
  <label class="units sep gap"><svg class="i"><use href="#s-ruler"/></svg><select aria-label="单位"><option>小数</option></select><svg class="dn dn10"><use href="#down"/></svg></label><button class="st sep" aria-label="快捷特性"><svg class="i"><use href="#s-props"/></svg></button>
  <button class="st sep gap" aria-label="锁定界面"><svg class="i"><use href="#s-lock"/></svg></button><button class="sa" aria-label="列表"><svg class="dn dn10"><use href="#down"/></svg></button><button class="st sep" aria-label="隔离对象"><svg class="i"><use href="#s-iso2"/></svg></button>
  <button class="st sep gap on" aria-label="硬件加速"><svg class="i"><use href="#s-clock"/></svg></button>
  <button class="wide sep gap" aria-label="图形"><svg width="32" height="32"><use href="#s-dwg"/></svg></button><button class="wide" aria-label="警告"><svg class="i"><use href="#s-warn"/></svg></button>
  <button class="st sep" aria-label="全屏"><svg class="i"><use href="#s-full"/></svg></button><button class="st" aria-label="自定义"><svg class="i"><use href="#s-menu"/></svg></button>
</footer>
</div>
</body>
</html>
```
FILE: styles.css
```css
* { box-sizing: border-box; }
body { margin: 0; padding: 8px; height: 100vh; background: #fcfcfc; overflow: hidden; font-family: "Noto Sans CJK SC", sans-serif; font-size: 18px; line-height: 24px; color: #eee; }
button { margin: 0; padding: 0; border: 0; background: none; font: inherit; color: inherit; display: flex; align-items: center; justify-content: center; white-space: nowrap; }
svg { display: block; flex: none; }
.defs { position: absolute; width: 0; height: 0; }
.i { width: 24px; height: 24px; }
.b { width: 48px; height: 48px; }
.dn { width: 8px; height: 5px; color: #fff; }
.dn10 { width: 10px; height: 7px; }
.dn12 { width: 12px; height: 8px; }
.app { height: 100%; display: flex; flex-direction: column; background: #383838; border-bottom: 3px solid #111; box-shadow: 0 0 6px 2px #98989c; }

/* title bar and menu */
.top { display: grid; grid-template-columns: 59px 1fr; grid-template-rows: 35px 32px; }
.appbtn { grid-row: 1 / 3; margin-bottom: 8px; gap: 5px; padding: 0 0 8px 5px; background: linear-gradient(#aaa, #4a4a4a); border-right: 2px solid #111; border-bottom: 2px solid #111; }
.appbtn .dn { color: #383845; }
.titlebar { position: relative; display: flex; background: linear-gradient(#969696, #717171); border-bottom: 1px solid #333; }
.qat { display: flex; width: 393px; padding-left: 8px; background: linear-gradient(#a0a0a0, #757575); border-right: 1px solid #444; }
.qat button { width: 36px; }
.qat .nar { width: 17px; }
.qat .dim .dn { color: #bbb; }
.qat .cust { width: 28px; }
.title { flex: 1; padding: 4px 0 0 92px; background: #fff; color: #111; white-space: nowrap; overflow: hidden; }
.search { width: 269px; margin: 0 0 2px 22px; border: 2px solid #333; background: #6e6e6e; font: inherit; color: #fff; }
.info { width: 355px; display: flex; align-items: stretch; border-right: 1px solid #444; background: linear-gradient(#a0a0a0, #757575); }
.info > button { width: 36px; }
.info .login { width: 174px; gap: 7px; padding: 0 1px 0 6px; justify-content: flex-start; }
.info .login .dn { margin-left: auto; }
.info .login + button { width: 44px; padding-left: 12px; }
.info .a360 { width: 62px; gap: 7px; padding-right: 7px; border-right: 1px solid #8d8d8d; }
.info .more { flex: 1; }
.winctl { display: flex; width: 267px; justify-content: flex-end; padding-right: 2px; background: #fff; }
.winctl button { width: 70px; }
.winctl svg { fill: none; stroke: #999; }
.notice { position: absolute; left: 631px; top: 0; height: 24px; width: 540px; padding-left: 3px; background: #4c4c4c; color: #ddd; font-weight: 500; line-height: 20px; white-space: nowrap; }
.notice b { font-family: "Liberation Mono", monospace; font-size: 15px; }
.menubar { display: flex; gap: 31px; padding: 0 5px 4px 17px; background: linear-gradient(#9c9c9c, #555); border-bottom: 2px solid #2c2c2c; color: #fff; }
.docctl { margin-left: auto; display: flex; align-items: center; gap: 9px; }

/* ribbon tabs */
.tabs { display: flex; height: 30px; padding-left: 6px; background: #525252; border-bottom: 2px solid #2e2e2e; color: #ccc; }
.tabs button { padding: 0 15px; }
.tabs .on { margin: 2px 2px 0 0; padding: 0 14px 2px 12px; border: 2px solid #333; border-bottom: 0; border-radius: 3px 3px 0 0; background: linear-gradient(#757575, #5e5e5e); color: #eee; }
.tabs .on + button { padding-left: 17px; }
.tabs .fold { gap: 7px; padding-left: 34px; }

/* ribbon */
.ribbon { display: flex; height: 148px; padding: 0 0 1px 1px; background: linear-gradient(#4a4a4a, #303030); border-bottom: 2px solid #777; overflow: hidden; }
.panel { flex: none; display: flex; flex-direction: column; background: #5a5a5a; border-right: 2px solid #3b3b3b; }
.body { display: grid; height: 118px; padding-top: 5px; grid-auto-rows: 36px; align-content: start; justify-content: start; }
.panel h3 { position: relative; margin: 0 2px; height: 26px; display: flex; align-items: center; justify-content: center; gap: 9px; background: linear-gradient(#4f4f4f, #474747); font-size: 18px; font-weight: 400; }
.corner { position: absolute; right: 4px; top: 10px; width: 8px; height: 8px; color: #ddd; }
.big { grid-row: 1 / 4; flex-direction: column; justify-content: flex-start; padding-top: 5px; text-align: center; }
.big span { padding-top: 4px; }
.big .dn { margin-top: 4px; }
.col { grid-row: 1 / 4; display: grid; grid-auto-rows: 36px; }
.p-model { width: 203px; } .p-model .body { grid-template-columns: 94px 62px 45px; }
.p-mesh { width: 102px; } .p-mesh .body { grid-template-columns: 63px 32px; }
.p-edit { width: 142px; } .p-edit .body { grid-template-columns: 44px 40px 37px 14px; }
.p-draw { width: 142px; } .p-draw .body { grid-template-columns: 46px 28px 50px 6px; }
.p-modify { width: 219px; } .p-modify .body { grid-template-columns: 41px 42px 33px 46px 32px 16px; }
.p-section { width: 92px; } .p-section .body { grid-template-columns: 88px; }
.p-mesh h3, .p-section h3, .p-ucs h3, .p-base h3 { padding-right: 19px; }
.p-ucs { width: 218px; } .p-ucs .body { padding-left: 4px; grid-template-columns: 36px 12px 52px 34px 38px 36px; }
.p-ucs .combo { grid-column: 3 / 7; justify-self: end; }
.p-view { width: 158px; } .p-view .body { padding-left: 2px; }
.vp { justify-content: flex-start; gap: 7px; padding-left: 6px; }
.combo { width: 150px; height: 33px; margin-top: 2px; display: flex; align-items: center; padding: 0 2px; background: linear-gradient(#565656, #696969); border: 2px solid #3a3a3a; }
select { appearance: none; flex: 1; min-width: 0; border: 0; padding: 0 4px; background: none; color: #eee; font: inherit; }
.p-select { width: 255px; } .p-select .body { padding-left: 2px; grid-template-columns: 56px 106px 85px 0; }
.p-select .active { height: 107px; background: linear-gradient(#7ba5e0, #5271a3 55%, #4f6a97); border: 1px solid #2d4772; padding-top: 4px; }
.side { grid-row: 1 / 4; align-items: flex-end; padding: 0 20px 20px 0; }
.shut { width: 88px; margin: 2px 1px 1px 2px; flex: none; flex-direction: column; justify-content: flex-start; padding: 6px 0; background: linear-gradient(#6a6a6a, #505050); outline: 2px solid #303030; }
.shut + .shut { width: 86px; margin-left: 4px; }
.shut span { padding-top: 4px; }
.shut .dn { margin-top: auto; }
.p-base { width: 91px; margin-left: 2px; }
.p-base .body { grid-template-columns: 91px; }

/* file tabs */
.files { display: flex; height: 43px; padding-top: 4px; background: #383838; border-bottom: 6px solid #565656; }
.file { position: relative; width: 216px; margin-left: 16px; justify-content: flex-start; padding-left: 30px; }
.file .shape { position: absolute; left: 0; top: 0; }
.file span, .file .x { position: relative; }
.file .x { margin-left: 42px; }
.add { align-items: flex-start; padding-top: 7px; margin-left: -5px; }

/* drawing area */
.canvas { flex: 1; position: relative; overflow: hidden; background: #212631; }
.drawing { position: absolute; inset: 0; width: 100%; height: 100%; }
.over { pointer-events: none; }
.wm { font-size: 69px; fill: #303541; }
.vplabel { position: absolute; left: 1px; top: 4px; line-height: 26px; }
.history { position: absolute; left: 472px; bottom: 43px; display: flex; flex-direction: column; align-items: flex-start; gap: 7px; font-size: 20px; line-height: 22px; color: #e4e4e4; }
.history div { padding: 0 4px; height: 24px; background: #5e6063; border-radius: 3px; white-space: pre; }
.history div:first-child { background: #4b4e54; color: #bbb; }
.history i { font: 18px/20px "Liberation Mono", monospace; }
.cmd { position: absolute; left: 380px; right: 380px; bottom: 1px; height: 39px; display: flex; border: 2px solid #5f6369; border-radius: 5px; overflow: hidden; }
.cmdl { display: flex; align-items: center; gap: 12px; width: 80px; padding-left: 8px; background: linear-gradient(#4c4f54, #393b3f 50%, #55585d); }
.grip { height: 28px; border-left: 2px dotted #888; }
.cmdr { flex: 1; display: flex; align-items: center; padding: 0 6px 0 7px; background: #bcbec1; }
.cmdr .dn { margin-left: 5px; color: #555; }
.cmdr input { flex: 1; min-width: 0; margin-left: 14px; border: 0; padding: 0; background: none; font: italic 20px "Noto Sans CJK SC", sans-serif; outline: 0; }
.cmdr input::placeholder { color: #686c72; opacity: 1; }
.viewcube { position: absolute; right: 28px; top: 10px; width: 130px; height: 136px; color: #b4b8be; font-size: 18px; }
.viewcube span { position: absolute; width: 24px; text-align: center; }
.viewcube .n { left: 53px; top: 3px; }
.viewcube .w { left: 0; top: 56px; }
.viewcube .e { right: 0; top: 56px; }
.viewcube .s { left: 53px; top: 110px; }
.viewcube .up2 { left: 49px; top: 54px; width: 32px; font-size: 28px; color: #4c515a; }
.wcs { position: absolute; right: 51px; top: 161px; width: 84px; height: 26px; gap: 8px; border-radius: 5px; background: #858a95; border: 1px solid #70757f; color: #3d424d; font-size: 15px; }
.navbar { position: absolute; right: 18px; top: 220px; border-radius: 3px; background: #585d66; }
.edge { position: absolute; right: 0; top: 0; bottom: 0; width: 14px; background: linear-gradient(90deg, #b3cbee 0 8px, #86cdfb 8px 10px, #111 10px 11px, #484848 11px); }
.meter { position: absolute; right: 0; top: 405px; width: 14px; height: 88px; border-radius: 5px 0 0 5px; background: #39415a; padding: 11px 2px 9px 5px; }
.meter span { display: block; height: 100%; background: repeating-linear-gradient(transparent 0 2px, #39415a 2px 3px), linear-gradient(#20283e 45%, #c8c75a 48%, #5dc19a); }

/* layout tabs */
.layouts { display: flex; height: 31px; padding: 0 0 4px 14px; border-top: 2px solid #505050; color: #b5b5b5; }
.layouts button { width: 78px; padding-bottom: 2px; background: #4e4e4e; clip-path: polygon(0 0, 100% 0, 92% 80%, 88% 100%, 18% 100%, 12% 80%); }
.layouts .on { width: 74px; background: linear-gradient(#606060, #8a8a8a); color: #fff; font-weight: 700; }
.layouts .plus { width: 35px; margin-left: 8px; clip-path: polygon(30% 0, 100% 0, 88% 80%, 70% 100%, 0 100%, 10% 30%); }

/* status bar */
.status { display: flex; height: 39px; padding-left: 77px; color: #fff; background: linear-gradient(90deg, #383838 77px, #484848 77px); overflow: hidden; }
.status > * { flex: none; border-top: 3px solid #707070; }
.sep, .coords { border-left: 2px solid #747474; }
.coords { width: 275px; padding-right: 10px; text-align: right; line-height: 36px; font-family: "Open Sans", sans-serif; font-weight: 600; font-size: 17px; }
.ms { width: 47px; font-weight: 500; }
.st { width: 36px; }
.st.sep { width: 38px; }
.st.on { background: #5b88c2; }
.sa { width: 23px; }
.gap { margin-left: 2px; }
.ratio { width: 48px; gap: 6px; }
.wide { width: 44px; }
.units { width: 152px; display: flex; align-items: center; padding: 0 7px 0 8px; font-weight: 500; }
.units select { margin-left: 10px; }
```
